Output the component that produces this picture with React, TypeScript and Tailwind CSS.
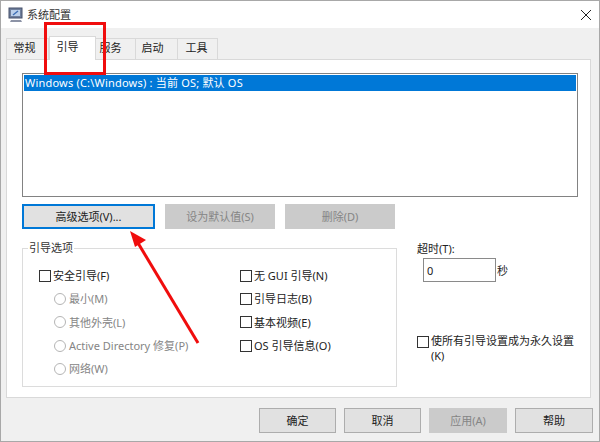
const tabs = [
  { label: "常规", className: "w-[43px] pr-[6px]" },
  { label: "引导", className: "w-[47px] pr-[10px]", active: true },
  { label: "服务", className: "w-[41px] pr-[10px]" },
  { label: "启动", className: "w-[43px] pr-[8px]" },
  { label: "工具", className: "w-[41px] pr-[2px]" },
];

function Box({ className = "" }: { className?: string }) {
  return <span className={`block h-[12px] w-[12px] shrink-0 border border-[#333] bg-white ${className}`} />;
}

function CheckRow({ label }: { label: string }) {
  return (
    <div className="flex h-[23.3px] items-center gap-[2px] text-[#222]">
      <Box />
      <span>{label}</span>
    </div>
  );
}

function RadioRow({ label }: { label: string }) {
  return (
    <div className="flex h-[23.3px] items-center gap-[3px] pl-[15px] text-[#858585]">
      <span className="block h-[12px] w-[12px] shrink-0 rounded-full border border-[#b5b5b5] bg-white" />
      <span>{label}</span>
    </div>
  );
}

function ActionButton({ label, width, disabled }: { label: string; width: string; disabled?: boolean }) {
  return (
    <div
      className={`flex h-[25px] items-center justify-center border ${width} ${
        disabled ? "border-[#cbcbcb] bg-[#cbcbcb] text-[#858585]" : "border-[#adadad] bg-[#e1e1e1] text-[#222]"
      }`}
    >
      {label}
    </div>
  );
}

export default function App() {
  return (
    <div
      className="relative flex h-[442px] w-[600px] flex-col overflow-hidden border border-[#a8a8a8] bg-[#f0f0f0] text-[11px] leading-none text-[#222]"
      style={{ fontFamily: '"Noto Sans", "Noto Sans CJK SC", sans-serif' }}
    >
      <div className="flex h-[27px] shrink-0 items-center bg-white pl-[7px]">
        <svg width="16" height="16" viewBox="0 0 16 16" className="mr-[3px]">
          <rect x="1" y="1" width="13" height="10" fill="#6f7f9c" stroke="#46506a" />
          <rect x="3" y="3" width="9" height="6" fill="#bcd0ea" />
          <path d="M3 13h10l1 2H2z" fill="#8c93a6" />
          <path d="M5 8l5-4" stroke="#3f6fb5" strokeWidth="1.5" />
        </svg>
        <span className="text-[#333]">系统配置</span>
        <svg width="12" height="12" viewBox="0 0 12 12" className="ml-auto mr-[7px]" fill="none" stroke="#222" strokeWidth="1">
          <path d="M1 1l10 10M11 1L1 11" />
        </svg>
      </div>

      <div className="flex h-[31px] shrink-0 items-end pl-[6px]">
        {tabs.map((tab) => (
          <div
            key={tab.label}
            className={`flex items-center justify-center border border-[#d9d9d9] ${tab.className} ${
              tab.active
                ? "z-10 -mb-px h-[24px] border-b-0 bg-white pb-[5px]"
                : "-ml-px h-[21px] border-b-0 bg-[#f0f0f0] pb-[3px]"
            }`}
          >
            {tab.label}
          </div>
        ))}
      </div>

      <div className="ml-[5px] flex h-[339px] w-[585px] shrink-0 flex-col border border-[#d9d9d9] bg-white px-[15px] pt-[13px]">
        <div className="h-[124px] w-[556px] shrink-0 border border-[#828282] bg-white p-px">
          <div className="flex h-[16px] items-center bg-[#0078d7] pb-px pl-px tracking-[0.2px] text-white">
            Windows (C:\Windows) : 当前 OS; 默认 OS
          </div>
        </div>

        <div className="mt-[7px] flex gap-[10px]">
          <div className="flex h-[25px] w-[133px] items-center justify-center border-2 border-[#0078d7] bg-[#e1e1e1] text-[#222]">
            高级选项(V)...
          </div>
          <ActionButton label="设为默认值(S)" width="w-[110px]" disabled />
          <ActionButton label="删除(D)" width="w-[110px]" disabled />
        </div>

        <div className="mt-[11px] flex">
          <fieldset className="flex h-[147px] w-[375px] shrink-0 border border-[#dcdcdc] pl-[16px] pt-[8px]">
            <legend className="-ml-[11px] h-[16px] px-px leading-[16px] text-[#333]">引导选项</legend>
            <div className="w-[201px]">
              <CheckRow label="安全引导(F)" />
              <RadioRow label="最小(M)" />
              <RadioRow label="其他外壳(L)" />
              <RadioRow label="Active Directory 修复(P)" />
              <RadioRow label="网络(W)" />
            </div>
            <div>
              <CheckRow label="无 GUI 引导(N)" />
              <CheckRow label="引导日志(B)" />
              <CheckRow label="基本视频(E)" />
              <CheckRow label="OS 引导信息(O)" />
            </div>
          </fieldset>

          <div className="ml-[20px] flex flex-col">
            <span className="mt-[3px]">超时(T):</span>
            <div className="ml-[6px] mt-[4px] flex items-center gap-px">
              <div className="flex h-[24px] w-[73px] items-center border border-[#8a8a8a] pl-[3px]">0</div>
              <span>秒</span>
            </div>
            <div className="mt-[51px] flex w-[160px] gap-[2px]">
              <Box className="mt-[3px]" />
              <span className="leading-[15px]">使所有引导设置成为永久设置 (K)</span>
            </div>
          </div>
        </div>
      </div>

      <div className="mt-[10px] flex justify-end gap-[8px] pr-[6px]">
        <ActionButton label="确定" width="w-[77px]" />
        <ActionButton label="取消" width="w-[77px]" />
        <ActionButton label="应用(A)" width="w-[78px]" disabled />
        <ActionButton label="帮助" width="w-[78px]" />
      </div>

      {/* red annotation over the dialog */}
      <div className="absolute left-[43px] top-[21px] h-[53px] w-[62px] border-[3px] border-[#f00d0d]" />
      <svg className="absolute left-0 top-0" width="598" height="440" viewBox="1 1 598 440" fill="none">
        <path d="M198 343L138 243" stroke="#f00d0d" strokeWidth="3" />
        <path d="M130 231l16 9-11 7z" fill="#f00d0d" />
      </svg>
    </div>
  );
}
